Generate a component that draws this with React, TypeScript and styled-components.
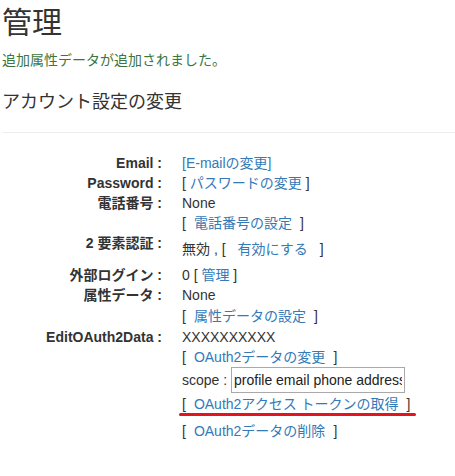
import React from "react";
import styled, { createGlobalStyle } from "styled-components";

const GlobalStyle = createGlobalStyle`
  html, body {
    margin: 0;
    padding: 0;
    background: #ffffff;
  }
  body {
    font-family: "Liberation Sans", Arial, "Noto Sans CJK JP", sans-serif;
    font-size: 14px;
    line-height: 20px;
    color: #333333;
  }
`;

const Page = styled.main`
  padding: 0 0 0 2px;
`;

const Title = styled.h2`
  margin: 6px 0 0;
  font-size: 30px;
  font-weight: 400;
  line-height: 33px;
  color: #333333;
`;

const Notice = styled.p`
  margin: 11px 0 0;
  color: #3c763d;
`;

const SectionTitle = styled.h4`
  margin: 22px 0 0;
  font-size: 18px;
  font-weight: 400;
  line-height: 20px;
  color: #333333;
`;

const Divider = styled.hr`
  margin: 20px 0 0;
  border: 0;
  border-top: 1px solid #eeeeee;
`;

const Details = styled.dl`
  display: grid;
  grid-template-columns: 160px 1fr;
  column-gap: 20px;
  margin: 20px 0 0;
`;

const Term = styled.dt`
  font-weight: bold;
  text-align: right;
  white-space: nowrap;
  line-height: 20px;
`;

const Desc = styled.dd`
  margin: 0;
  display: flex;
  flex-direction: column;
  align-items: flex-start;
`;

const Line = styled.div<{ $h?: number; $top?: number }>`
  display: flex;
  align-items: center;
  height: ${(p) => p.$h ?? 20}px;
  margin-top: ${(p) => p.$top ?? 0}px;
  white-space: pre;
`;

const Action = styled.a<{ $gap?: number }>`
  color: #337ab7;
  text-decoration: none;
  margin: 0 ${(p) => p.$gap ?? 0}px;
  cursor: pointer;
`;

/* highlighted action: a red marker stroke drawn under the line */
const Marked = styled.span`
  position: relative;
  display: inline-flex;
  &::after {
    content: "";
    position: absolute;
    left: -3px;
    right: -6px;
    bottom: -2px;
    height: 3px;
    border-radius: 2px;
    background: #e3141d;
  }
`;

const ScopeInput = styled.input`
  box-sizing: border-box;
  width: 174px;
  height: 26px;
  margin: 0;
  padding: 1px 2px;
  border: 1px solid #a9a9a9;
  border-radius: 0;
  font-family: "Liberation Sans", Arial, sans-serif;
  font-size: 14px;
  color: #222222;
  background: #ffffff;
  outline: none;
`;

export default function App() {
  return (
    <>
      <GlobalStyle />
      <Page>
        <Title>管理</Title>
        <Notice>追加属性データが追加されました。</Notice>
        <SectionTitle>アカウント設定の変更</SectionTitle>
        <Divider />
        <Details>
          <Term>Email :</Term>
          <Desc>
            <Line>
              <Action>[E-mailの変更]</Action>
            </Line>
          </Desc>

          <Term>Password :</Term>
          <Desc>
            <Line>
              {"[ "}
              <Action>パスワードの変更</Action>
              {" ]"}
            </Line>
          </Desc>

          <Term>電話番号 :</Term>
          <Desc>
            <Line>None</Line>
            <Line>
              [<Action $gap={8}>電話番号の設定</Action>]
            </Line>
          </Desc>

          <Term>2 要素認証 :</Term>
          <Desc>
            <Line $h={32}>
              {"無効 , ["}
              <Action $gap={12}>有効にする</Action>]
            </Line>
          </Desc>

          <Term>外部ログイン :</Term>
          <Desc>
            <Line>
              {"0 [ "}
              <Action>管理</Action>
              {" ]"}
            </Line>
          </Desc>

          <Term>属性データ :</Term>
          <Desc>
            <Line>None</Line>
            <Line $h={22}>
              [<Action $gap={8}>属性データの設定</Action>]
            </Line>
          </Desc>

          <Term>EditOAuth2Data :</Term>
          <Desc>
            <Line>XXXXXXXXXX</Line>
            <Line>
              [<Action $gap={8}>OAuth2データの変更</Action>]
            </Line>
            <Line $h={26}>
              {"scope : "}
              <ScopeInput defaultValue="profile email phone address" />
            </Line>
            <Line $top={1}>
              <Marked>
                [<Action $gap={8}>OAuth2アクセス トークンの取得</Action>]
              </Marked>
            </Line>
            <Line $top={7}>
              [<Action $gap={8}>OAuth2データの削除</Action>]
            </Line>
          </Desc>
        </Details>
      </Page>
    </>
  );
}
